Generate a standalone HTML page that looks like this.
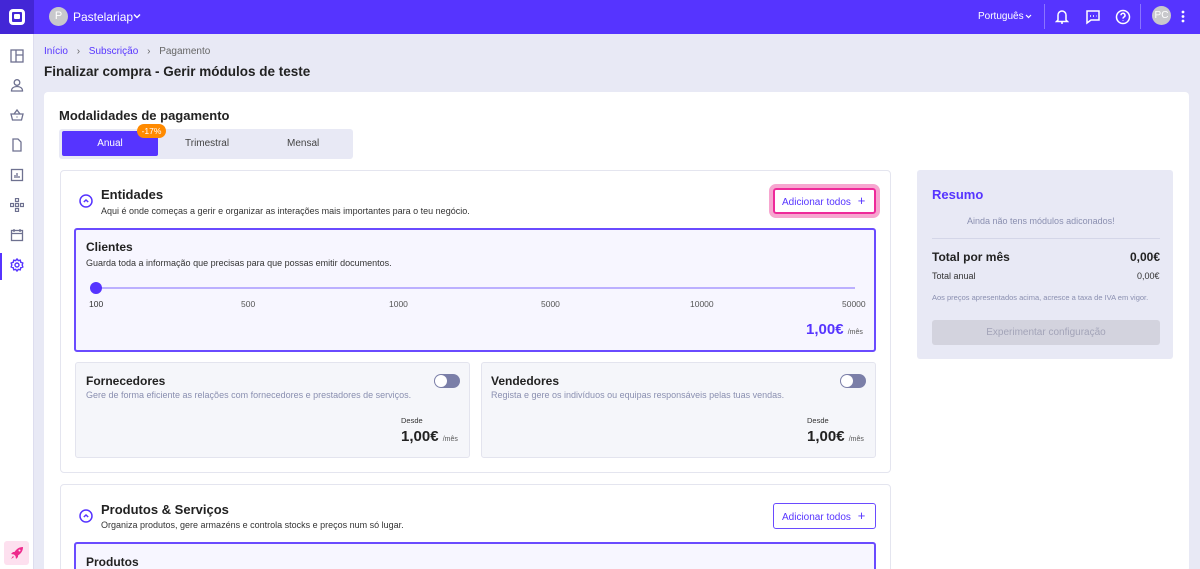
<!DOCTYPE html>
<html><head><meta charset="utf-8"><style>
*{box-sizing:border-box;margin:0;padding:0}
html,body{width:1200px;height:569px;overflow:hidden}
body{background:#e8e9f5;font-family:"Liberation Sans",sans-serif;color:#222;position:relative}
.top{position:absolute;left:0;top:0;width:1200px;height:34px;background:#5634ff}
.logo{position:absolute;left:0;top:0;width:34px;height:34px;background:#4326d6}
.side{position:absolute;left:0;top:34px;width:34px;height:535px;background:#fff;border-right:1px solid #dde}
.ic{position:absolute;left:10px;width:14px;height:14px}
.t{position:absolute;white-space:nowrap}
.card{position:absolute;background:#fff;border-radius:4px}
.box{position:absolute;border:1px solid #e4e5ef;border-radius:4px;background:#fff}
.sub{position:absolute;background:#f5f6fa;border:1px solid #e3e4ee;border-radius:3px}
.tog{position:absolute;width:26px;height:14px;border-radius:7px;background:#7b7fa8}
.tog::after{content:"";position:absolute;left:1px;top:1px;width:12px;height:12px;border-radius:50%;background:#fff}
</style></head><body>
<div class="top"></div>
<div class="logo"><div style="position:absolute;left:9px;top:9px;width:16px;height:16px;border:3px solid #fff;border-radius:4px"></div><div style="position:absolute;left:14px;top:14px;width:6px;height:5px;background:#fff;border-radius:1px"></div></div>
<div style="position:absolute;left:49px;top:7px;width:19px;height:19px;border-radius:50%;background:#c8c8cc;color:#fff;font-size:11px;text-align:center;line-height:19px">P</div>
<div class="t" style="left:73px;top:10px;color:#fff;font-size:12px">Pastelariap</div>
<svg style="position:absolute;left:133px;top:13px" width="8" height="6" viewBox="0 0 8 6" fill="none" stroke="#fff" stroke-width="1.4"><path d="M1 1.5l3 3 3-3"/></svg>
<div class="t" style="left:978px;top:11px;color:#fff;font-size:10px">Português</div>
<svg style="position:absolute;left:1025px;top:14px" width="7" height="5" viewBox="0 0 7 5" fill="none" stroke="#fff" stroke-width="1.2"><path d="M1 1l2.5 2.5L6 1"/></svg>
<div style="position:absolute;left:1044px;top:4px;width:1px;height:25px;background:#8b74ff"></div>
<div style="position:absolute;left:1140px;top:4px;width:1px;height:25px;background:#8b74ff"></div>
<svg style="position:absolute;left:1055px;top:9px" width="14" height="16" viewBox="0 0 14 16" fill="none" stroke="#fff" stroke-width="1.5"><path d="M3 11V6a4 4 0 018 0v5l1.5 1.5h-11z"/><path d="M6 14h2"/></svg>
<svg style="position:absolute;left:1085px;top:9px" width="16" height="16" viewBox="0 0 16 16" fill="none" stroke="#fff" stroke-width="1.5"><path d="M2 2h12v9H6l-4 3z"/><path d="M5 7h1M8 7h1M11 7h0.5"/></svg>
<svg style="position:absolute;left:1115px;top:9px" width="16" height="16" viewBox="0 0 16 16" fill="none" stroke="#fff" stroke-width="1.5"><circle cx="8" cy="8" r="6.5"/><path d="M6 6.3a2 2 0 113 1.7c-.8.4-1 .8-1 1.6M8 11.5v.5"/></svg>
<div style="position:absolute;left:1152px;top:6px;width:19px;height:19px;border-radius:50%;background:#c8c8cc;color:#fff;font-size:10px;text-align:center;line-height:19px">PC</div>
<svg style="position:absolute;left:1181px;top:10px" width="4" height="13" viewBox="0 0 4 13" fill="#fff"><circle cx="2" cy="2" r="1.4"/><circle cx="2" cy="6.5" r="1.4"/><circle cx="2" cy="11" r="1.4"/></svg>

<div class="side"></div>
<svg class="ic" style="top:49px" viewBox="0 0 14 14" fill="none" stroke="#6e7190" stroke-width="1.3"><rect x="1" y="1" width="12" height="12"/><path d="M6 1v12M6 6h7"/></svg>
<svg class="ic" style="top:78px" viewBox="0 0 14 14" fill="none" stroke="#6e7190" stroke-width="1.3"><circle cx="7" cy="4.5" r="2.8"/><path d="M1.5 13c0-3 2.5-4.5 5.5-4.5s5.5 1.5 5.5 4.5z"/></svg>
<svg class="ic" style="top:108px" viewBox="0 0 14 14" fill="none" stroke="#6e7190" stroke-width="1.3"><path d="M1 6h12l-1.5 6h-9zM4 6l3-4 3 4M7 8.5v1"/></svg>
<svg class="ic" style="top:138px" viewBox="0 0 14 14" fill="none" stroke="#6e7190" stroke-width="1.3"><path d="M3 1h5l3 3v9H3z"/></svg>
<svg class="ic" style="top:168px" viewBox="0 0 14 14" fill="none" stroke="#6e7190" stroke-width="1.3"><rect x="1.5" y="1.5" width="11" height="11"/><path d="M5 10V7M7 10V5M9 10V8"/></svg>
<svg class="ic" style="top:198px" viewBox="0 0 14 14" fill="none" stroke="#6e7190" stroke-width="1.2"><rect x="5.5" y="0.5" width="3" height="3"/><rect x="0.5" y="5.5" width="3" height="3"/><rect x="5.5" y="5.5" width="3" height="3"/><rect x="10.5" y="5.5" width="3" height="3"/><rect x="5.5" y="10.5" width="3" height="3"/></svg>
<svg class="ic" style="top:228px" viewBox="0 0 14 14" fill="none" stroke="#6e7190" stroke-width="1.3"><rect x="1.5" y="2.5" width="11" height="10"/><path d="M1.5 5.5h11M4 1v3M10 1v3"/></svg>
<div style="position:absolute;left:0;top:253px;width:2px;height:27px;background:#5634ff"></div>
<svg class="ic" style="top:258px" viewBox="0 0 14 14" fill="none" stroke="#5634ff" stroke-width="1.4"><circle cx="7" cy="7" r="2"/><path d="M7 1l1.3 1.6 2-.4.4 2L12.8 5l-.6 2 .6 2-2.1.8-.4 2-2-.4L7 13l-1.3-1.6-2 .4-.4-2L1.2 9l.6-2-.6-2 2.1-.8.4-2 2 .4z"/></svg>
<div style="position:absolute;left:4px;top:541px;width:25px;height:24px;background:#fde0ef;border-radius:3px"></div>
<svg style="position:absolute;left:10px;top:546px" width="14" height="14" viewBox="0 0 14 14" fill="#ee2a8c"><path d="M13 1c-4 0-6.5 2-8.5 5L3 6 1 8l3 .5L5.5 10l.5 3 2-2V9.5C11 7.5 13 5 13 1z"/><circle cx="9.5" cy="4.5" r="1" fill="#fde0ef"/><path d="M3 10l-2 3 3-2z"/></svg>

<div class="t" style="left:44px;top:46px;font-size:10px;color:#5634ff">Início <span style="color:#666;margin:0 6px">›</span> Subscrição <span style="color:#666;margin:0 6px">›</span> <span style="color:#666">Pagamento</span></div>
<div class="t" style="left:44px;top:64px;font-size:13.5px;font-weight:bold;color:#222">Finalizar compra - Gerir módulos de teste</div>

<div class="card" style="left:44px;top:92px;width:1145px;height:480px"></div>
<div class="t" style="left:59px;top:108px;font-size:13px;font-weight:bold">Modalidades de pagamento</div>
<div style="position:absolute;left:59px;top:129px;width:294px;height:30px;background:#e8e9f5;border-radius:3px"></div>
<div style="position:absolute;left:62px;top:131px;width:96px;height:25px;background:#5634ff;border-radius:2px;color:#fff;font-size:10px;text-align:center;line-height:25px">Anual</div>
<div style="position:absolute;left:137px;top:124px;width:29px;height:14px;background:#ff8a00;border-radius:7px;color:#fff;font-size:8.5px;text-align:center;line-height:14px">-17%</div>
<div class="t" style="left:185px;top:138px;font-size:10px;color:#444">Trimestral</div>
<div class="t" style="left:287px;top:138px;font-size:10px;color:#444">Mensal</div>

<div class="box" style="left:60px;top:170px;width:831px;height:303px"></div>
<svg style="position:absolute;left:79px;top:194px" width="14" height="14" viewBox="0 0 14 14" fill="none" stroke="#5634ff" stroke-width="1.5"><circle cx="7" cy="7" r="6"/><path d="M4.8 8l2.2-2 2.2 2"/></svg>
<div class="t" style="left:101px;top:187px;font-size:13px;font-weight:bold">Entidades</div>
<div class="t" style="left:101px;top:206px;font-size:9px;color:#333">Aqui é onde começas a gerir e organizar as interações mais importantes para o teu negócio.</div>
<div style="position:absolute;left:769px;top:184px;width:111px;height:34px;border:4px solid #f7a6d0;border-radius:7px"></div>
<div style="position:absolute;left:773px;top:188px;width:103px;height:26px;border:2px solid #ee2a9a;border-radius:3px;background:#fff;color:#5634ff;font-size:10px;line-height:22px;padding-left:7px">Adicionar todos <span style="font-size:13px;margin-left:4px">+</span></div>

<div style="position:absolute;left:74px;top:228px;width:802px;height:124px;background:#f7f6ff;border:2px solid #6a4bff;border-radius:3px"></div>
<div class="t" style="left:86px;top:240px;font-size:12px;font-weight:bold">Clientes</div>
<div class="t" style="left:86px;top:258px;font-size:9px;color:#333">Guarda toda a informação que precisas para que possas emitir documentos.</div>
<div style="position:absolute;left:96px;top:287px;width:759px;height:2px;background:#bcb0ff"></div>
<div style="position:absolute;left:90px;top:282px;width:12px;height:12px;border-radius:50%;background:#5634ff"></div>
<div class="t" style="left:89px;top:299px;font-size:8.5px;color:#333">100</div>
<div class="t" style="left:241px;top:299px;font-size:8.5px;color:#555">500</div>
<div class="t" style="left:389px;top:299px;font-size:8.5px;color:#555">1000</div>
<div class="t" style="left:541px;top:299px;font-size:8.5px;color:#555">5000</div>
<div class="t" style="left:690px;top:299px;font-size:8.5px;color:#555">10000</div>
<div class="t" style="left:842px;top:299px;font-size:8.5px;color:#555">50000</div>
<div class="t" style="left:806px;top:321px;font-size:15px;font-weight:bold;color:#5634ff">1,00€ <span style="font-size:7px;font-weight:normal;color:#555">/mês</span></div>

<div class="sub" style="left:75px;top:362px;width:395px;height:96px"></div>
<div class="t" style="left:86px;top:374px;font-size:12px;font-weight:bold">Fornecedores</div>
<div class="tog" style="left:434px;top:374px"></div>
<div class="t" style="left:86px;top:390px;font-size:9px;color:#8a8fb0">Gere de forma eficiente as relações com fornecedores e prestadores de serviços.</div>
<div class="t" style="left:401px;top:416px;font-size:7.5px;color:#333">Desde</div>
<div class="t" style="left:401px;top:428px;font-size:15px;font-weight:bold">1,00€ <span style="font-size:7px;font-weight:normal;color:#555">/mês</span></div>

<div class="sub" style="left:481px;top:362px;width:395px;height:96px"></div>
<div class="t" style="left:491px;top:374px;font-size:12px;font-weight:bold">Vendedores</div>
<div class="tog" style="left:840px;top:374px"></div>
<div class="t" style="left:491px;top:390px;font-size:9px;color:#8a8fb0">Regista e gere os indivíduos ou equipas responsáveis pelas tuas vendas.</div>
<div class="t" style="left:807px;top:416px;font-size:7.5px;color:#333">Desde</div>
<div class="t" style="left:807px;top:428px;font-size:15px;font-weight:bold">1,00€ <span style="font-size:7px;font-weight:normal;color:#555">/mês</span></div>

<div class="box" style="left:60px;top:484px;width:831px;height:100px"></div>
<svg style="position:absolute;left:79px;top:509px" width="14" height="14" viewBox="0 0 14 14" fill="none" stroke="#5634ff" stroke-width="1.5"><circle cx="7" cy="7" r="6"/><path d="M4.8 8l2.2-2 2.2 2"/></svg>
<div class="t" style="left:101px;top:502px;font-size:13px;font-weight:bold">Produtos &amp; Serviços</div>
<div class="t" style="left:101px;top:520px;font-size:9px;color:#333">Organiza produtos, gere armazéns e controla stocks e preços num só lugar.</div>
<div style="position:absolute;left:773px;top:503px;width:103px;height:26px;border:1px solid #6a4bff;border-radius:3px;background:#fff;color:#5634ff;font-size:10px;line-height:24px;padding-left:8px">Adicionar todos <span style="font-size:13px;margin-left:4px">+</span></div>
<div style="position:absolute;left:74px;top:542px;width:802px;height:40px;background:#f7f6ff;border:2px solid #6a4bff;border-radius:3px"></div>
<div class="t" style="left:86px;top:555px;font-size:12px;font-weight:bold">Produtos</div>

<div style="position:absolute;left:917px;top:170px;width:256px;height:189px;background:#e8e9f5;border-radius:3px"></div>
<div class="t" style="left:932px;top:187px;font-size:13px;font-weight:bold;color:#5634ff">Resumo</div>
<div class="t" style="left:967px;top:216px;font-size:9px;color:#8a8fb0">Ainda não tens módulos adiconados!</div>
<div style="position:absolute;left:932px;top:238px;width:228px;height:1px;background:#d4d6e8"></div>
<div class="t" style="left:932px;top:250px;font-size:12px;font-weight:bold">Total por mês</div>
<div class="t" style="left:1130px;top:250px;font-size:12px;font-weight:bold">0,00€</div>
<div class="t" style="left:932px;top:271px;font-size:9px;color:#333">Total anual</div>
<div class="t" style="left:1137px;top:271px;font-size:9px;color:#333">0,00€</div>
<div class="t" style="left:932px;top:293px;font-size:7.5px;color:#8a8fb0">Aos preços apresentados acima, acresce a taxa de IVA em vigor.</div>
<div style="position:absolute;left:932px;top:320px;width:228px;height:25px;background:#d3d3de;border-radius:3px;color:#a3a4b8;font-size:10px;text-align:center;line-height:25px">Experimentar configuração</div>
</body></html>
